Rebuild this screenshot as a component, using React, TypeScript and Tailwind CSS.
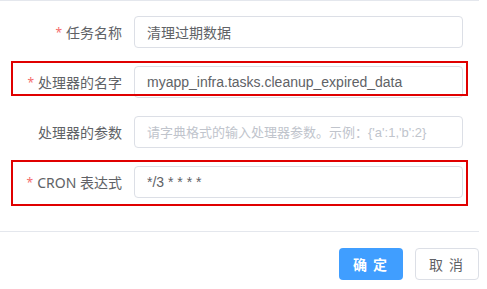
type Field = {
  label: string;
  required?: boolean;
  value?: string;
  placeholder?: string;
  mark?: "short" | "tall";
};

const fields: Field[] = [
  { label: "任务名称", required: true, value: "清理过期数据" },
  {
    label: "处理器的名字",
    required: true,
    value: "myapp_infra.tasks.cleanup_expired_data",
    mark: "short",
  },
  {
    label: "处理器的参数",
    placeholder: "请字典格式的输入处理器参数。示例：{'a':1,'b':2}",
  },
  { label: "CRON 表达式", required: true, value: "*/3 * * * *", mark: "tall" },
];

const labelFont = {
  fontFamily: '"Noto Sans", "Noto Sans CJK SC", sans-serif',
};
const inputFont = {
  fontFamily: '"Liberation Sans", "Noto Sans CJK SC", sans-serif',
};

function Row({ field }: { field: Field }) {
  return (
    <div className="relative flex h-8 items-center">
      <label
        className="w-[134px] shrink-0 pr-3 text-right text-[14px] text-[#606266]"
        style={labelFont}
      >
        {field.required && (
          <span className="mr-1 align-[1px] text-[12px] text-[#f56c6c]">*</span>
        )}
        {field.label}
      </label>
      <input
        readOnly
        defaultValue={field.value}
        placeholder={field.placeholder}
        className="h-8 w-[329px] rounded border border-[#dcdfe6] bg-white px-3 text-[14px] text-[#606266] outline-none placeholder:text-[13px] placeholder:text-[#c0c4cc]"
        style={inputFont}
      />
      {field.mark === "short" && (
        <div className="pointer-events-none absolute left-[11px] top-[-5px] h-[35px] w-[457px] border-2 border-[#e00000]" />
      )}
      {field.mark === "tall" && (
        <div className="pointer-events-none absolute left-[11px] top-[-6px] h-[46px] w-[457px] border-2 border-[#e00000]" />
      )}
    </div>
  );
}

export default function App() {
  return (
    <div className="h-[289px] w-[487px] bg-white">
      <div className="w-[479px] border-t border-[#e4e7ed]">
        <div className="flex flex-col gap-[18px] pt-[15px]">
          {fields.map((f) => (
            <Row key={f.label} field={f} />
          ))}
        </div>

        <div className="mt-[33px] border-t border-[#e4e7ed]" />

        <div className="flex justify-end gap-3 pt-4" style={labelFont}>
          <button className="h-8 w-16 rounded bg-[#409eff] pl-[4px] text-[14px] font-bold tracking-[6px] text-white">
            确定
          </button>
          <button className="h-8 w-16 rounded border border-[#dcdfe6] bg-white pl-[4px] text-[14px] tracking-[6px] text-[#606266]">
            取消
          </button>
        </div>
      </div>
    </div>
  );
}
